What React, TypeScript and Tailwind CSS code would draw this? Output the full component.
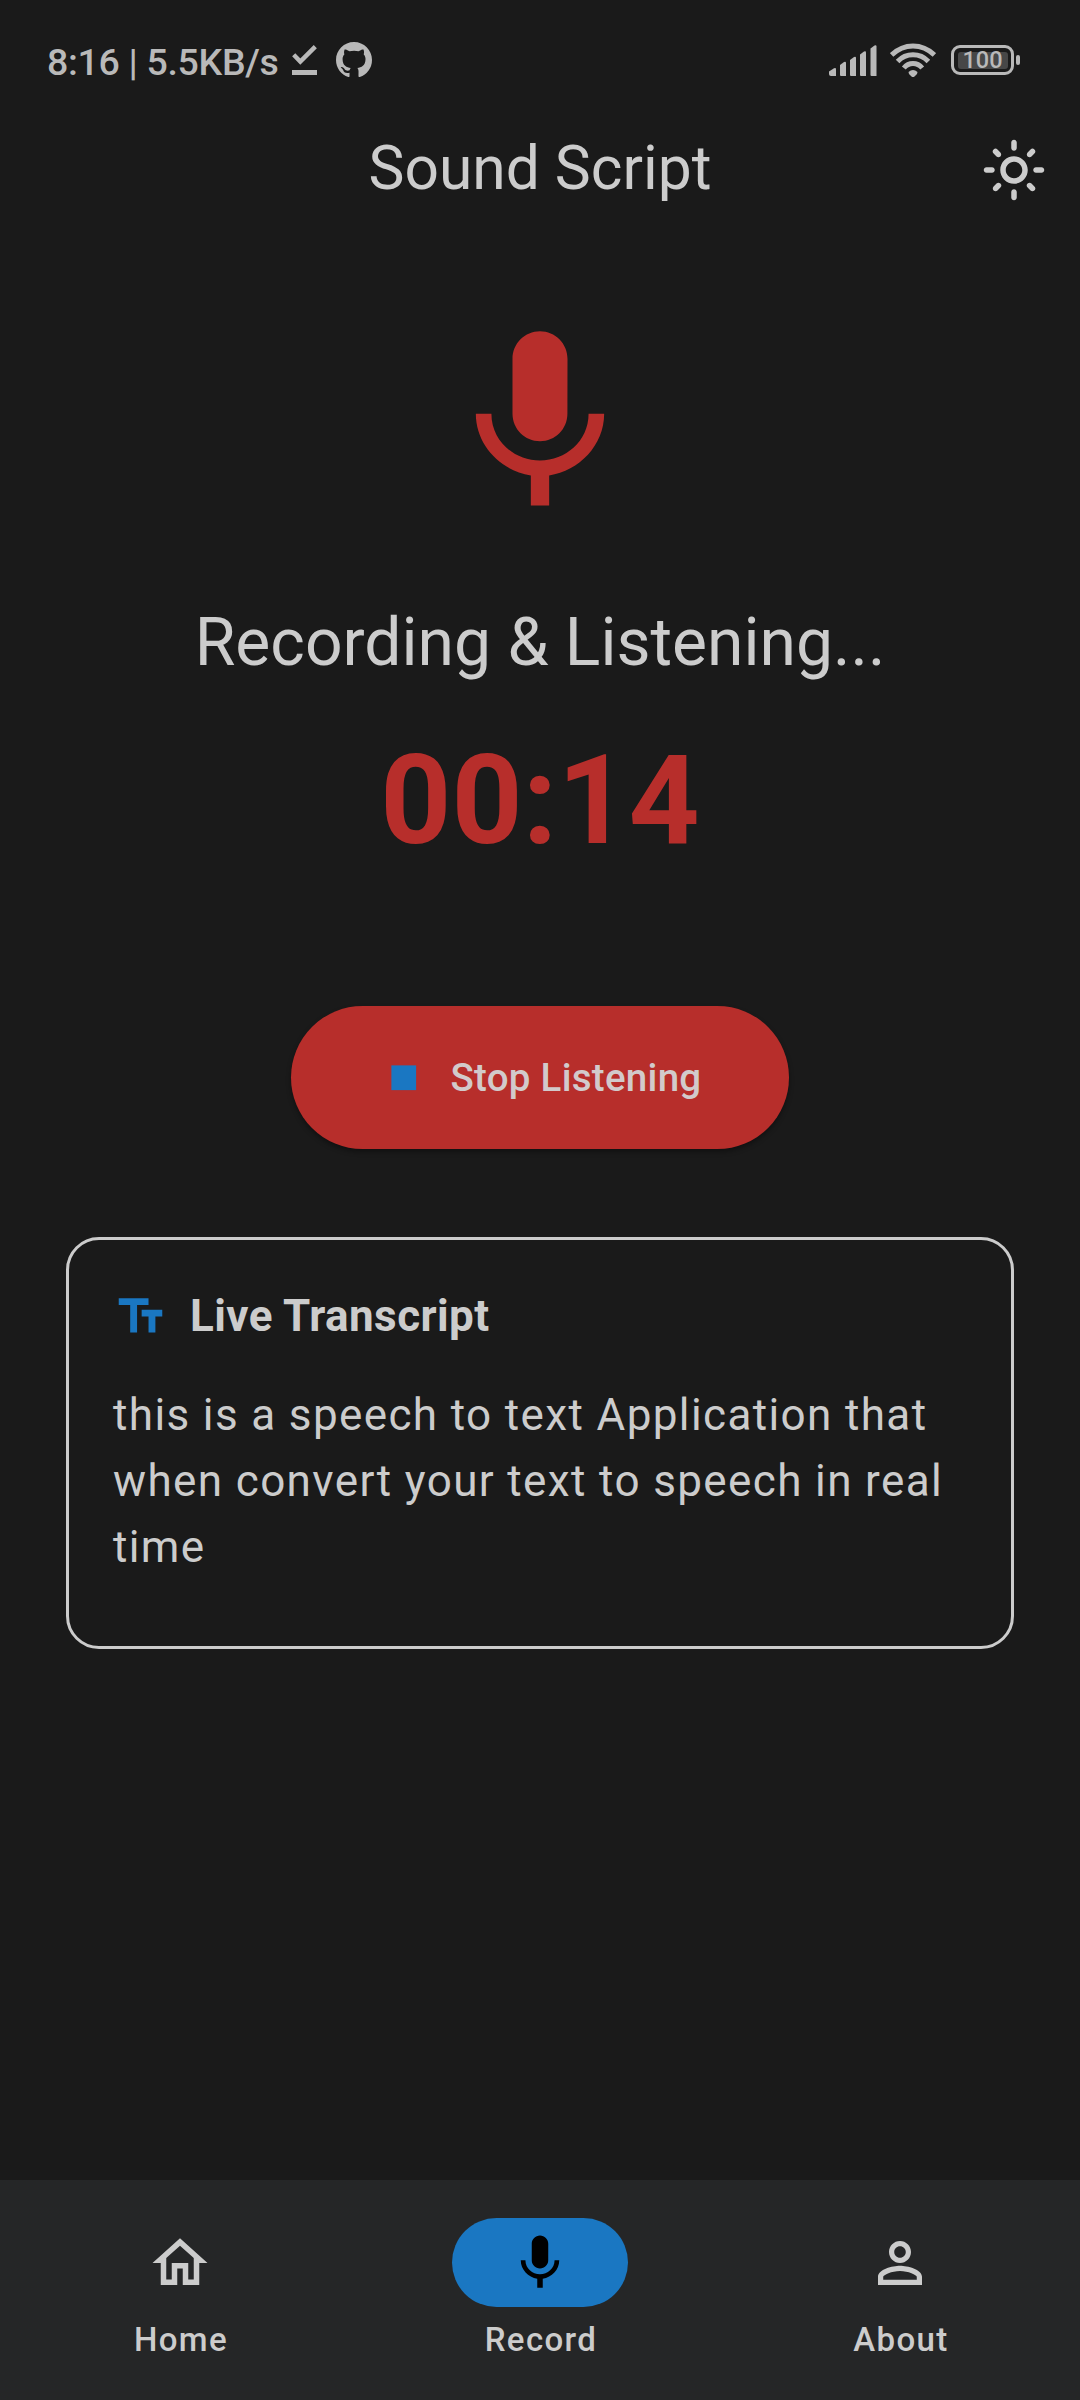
import type { ReactNode } from "react";
import { MdOutlineLightMode } from "react-icons/md";

const MIC =
  "M12 14c1.66 0 2.99-1.34 2.99-3L15 5c0-1.66-1.34-3-3-3S9 3.34 9 5v6c0 1.66 1.34 3 3 3zm5.3-3c0 3-2.54 5.1-5.3 5.1S6.7 14 6.7 11H5c0 3.41 2.72 6.23 6 6.72V21h2v-3.28c3.28-.48 6-3.3 6-6.72h-1.7z";
const HOME =
  "M12 5.69l5 4.5V18h-2v-6H9v6H7v-7.81l5-4.5M12 3L2 12h3v8h6v-6h2v6h6v-8h3L12 3z";
const PERSON =
  "M12 5.9c1.16 0 2.1.94 2.1 2.1s-.94 2.1-2.1 2.1S9.9 9.16 9.9 8s.94-2.1 2.1-2.1m0 9c2.97 0 6.1 1.46 6.1 2.1v1.1H5.9V17c0-.64 3.13-2.1 6.1-2.1M12 4C9.79 4 8 5.79 8 8s1.79 4 4 4 4-1.79 4-4-1.79-4-4-4zm0 9c-2.67 0-8 1.34-8 4v3h16v-3c0-2.66-5.33-4-8-4z";
const TEXT_FIELDS = "M2.5 4v3h5v12h3V7h5V4h-13zm19 5h-9v3h3v7h3v-7h3V9z";
const STOP = "M6 6h12v12H6z";
const GITHUB =
  "M8 0C3.58 0 0 3.58 0 8c0 3.54 2.29 6.53 5.47 7.59.4.07.55-.17.55-.38 0-.19-.01-.82-.01-1.49-2.01.37-2.53-.49-2.69-.94-.09-.23-.48-.94-.82-1.13-.28-.15-.68-.52-.01-.53.63-.01 1.08.58 1.23.82.72 1.21 1.87.87 2.33.66.07-.52.28-.87.51-1.07-1.78-.2-3.64-.89-3.64-3.95 0-.87.31-1.59.82-2.15-.08-.2-.36-1.02.08-2.12 0 0 .67-.21 2.2.82.64-.18 1.32-.27 2-.27s1.36.09 2 .27c1.53-1.04 2.2-.82 2.2-.82.44 1.1.16 1.92.08 2.12.51.56.82 1.27.82 2.15 0 3.07-1.87 3.75-3.65 3.95.29.25.54.73.54 1.48 0 1.07-.01 1.93-.01 2.2 0 .21.15.46.55.38A8.01 8.01 0 0 0 16 8c0-4.42-3.58-8-8-8z";

function Icon({ d, className }: { d: string; className: string }) {
  return (
    <svg viewBox="0 0 24 24" fill="currentColor" className={className}>
      <path d={d} />
    </svg>
  );
}

function StatusBar() {
  return (
    <div className="flex h-[93px] shrink-0 items-start justify-between pl-[47px] pr-[60px] text-[#b9b9b9]">
      <div className="flex pt-[42px]">
        <span className="-mt-[2px] w-[245px] whitespace-nowrap text-[37.5px] font-medium leading-[44px] tracking-[-0.33px]">
          8:16 | 5.5KB/s
        </span>
        <svg viewBox="0 0 25 30" className="mt-[3px] h-[30px] w-[25px]">
          <path d="M1.7 9.8L8.3 16.6L23.3 1.6" fill="none" stroke="currentColor" strokeWidth="4.4" />
          <path d="M0 25h25v5H0z" fill="currentColor" />
        </svg>
        <svg viewBox="0 0 16 16" fill="currentColor" className="ml-[19px] size-[36px]">
          <path d={GITHUB} />
        </svg>
      </div>
      <div className="flex pt-[43px]">
        <svg viewBox="0 0 48 33" fill="currentColor" className="h-[33px] w-[48px]">
          <path d="M0 28.500l5-3.200q2-1 2 1v6.700H2q-2 0-2-2z" />
          <path d="M11 22l4-3q2-1 2 1v13h-5q-1 0-1-1z" />
          <path d="M21 17l4-3q2-1 2 1v18h-5q-1 0-1-1z" />
          <path d="M31 11.500l4-3q2-1 2 1v23.500h-5q-1 0-1-1z" />
          <path d="M41.500 5.500l4-3q2-1 2 1v29.500h-5q-1 0-1-1z" />
        </svg>
        <svg viewBox="0 0 46 34" className="ml-[13px] h-[34px] w-[46px]">
          <g fill="none" stroke="currentColor" strokeWidth="5">
            <path d="M1.600 12Q11 3 23 3T44.400 12" />
            <path d="M7.600 18.500Q14 11.800 23 11.800T38.400 18.500" />
            <path d="M13.800 25Q17.500 20.600 23 20.600T32.200 25" />
          </g>
          <path d="M18.500 29Q23 25 27.500 29L27 31L24.500 33.500Q23 34.500 21.500 33.500L19 31z" fill="currentColor" />
        </svg>
        <div className="ml-[15px] mt-[2px] flex h-[30px] w-[63px] rounded-[9px] border-[3px] border-current p-[3.5px]">
          <div className="flex flex-1 items-center justify-center rounded-[3px] bg-[#474747]">
            <span className="pt-[2px] text-[23.5px] font-medium leading-none">100</span>
          </div>
        </div>
        <div className="ml-[2px] mt-[12px] h-[10px] w-[4px] rounded-[2px] bg-current" />
      </div>
    </div>
  );
}

function NavItem({ label, active, children }: { label: string; active?: boolean; children: ReactNode }) {
  return (
    <div className="flex flex-1 flex-col items-center pt-[38px]">
      <div
        className={
          active
            ? "flex h-[88.5px] w-[176px] items-center justify-center rounded-full bg-[#1a77c2] pt-px text-black"
            : "flex h-[88.5px] w-[176px] items-center justify-center pt-px"
        }
      >
        {children}
      </div>
      <span className="ml-[2px] mt-[11.5px] text-[33px] font-medium leading-[44px] tracking-[1.375px]">{label}</span>
    </div>
  );
}

export default function App() {
  return (
    <div className="flex h-[2400px] w-[1080px] flex-col overflow-hidden bg-[#1a1a1a] font-[Roboto,sans-serif] text-[#cccccc]">
      <StatusBar />

      <header className="grid h-[154px] shrink-0 grid-cols-[1fr_auto_1fr] items-center pr-[33px]">
        <h1 className="col-start-2 ml-[33px] text-[60.5px] leading-[77px] -mt-[3px]">Sound Script</h1>
        <MdOutlineLightMode className="size-[66px] justify-self-end" />
      </header>

      <main className="flex flex-1 flex-col items-center px-[66px] pt-[66px]">
        <Icon d={MIC} className="size-[220px] text-[#b72e2b]" />
        <p className="mt-[70px] whitespace-nowrap text-[66px] leading-[80px]">Recording &amp; Listening...</p>
        <p className="mt-[48px] text-[124px] font-bold leading-[140px] text-[#b72e2b]">00:14</p>
        <button className="mt-[135px] flex h-[143px] w-[498px] items-center rounded-full bg-[#b72e2b] pl-[88px] text-[#d2cacb] shadow-[0_3px_5px_rgba(0,0,0,0.35)]">
          <Icon d={STOP} className="size-[49.5px] text-[#1a77c2]" />
          <span className="ml-[22px] whitespace-nowrap text-[38.5px] font-medium leading-[55px] tracking-[0.275px]">
            Stop Listening
          </span>
        </button>

        <section className="mt-[88px] h-[412px] w-full rounded-[33px] border-[3px] border-[#cccccc] px-[44px] pt-[43px]">
          <div className="flex h-[66px] items-center">
            <Icon d={TEXT_FIELDS} className="size-[55px] text-[#1a77c2]" />
            <h2 className="ml-[22px] text-[44px] font-bold leading-[66px] tracking-[0.4125px]">Live Transcript</h2>
          </div>
          <p className="mt-[33px] text-[44px] leading-[66px] tracking-[1.375px]">
            this is a speech to text Application that when convert your text to speech in real time
          </p>
        </section>
      </main>

      <nav className="flex h-[220px] shrink-0 bg-[#252627]">
        <NavItem label="Home">
          <Icon d={HOME} className="size-[66px]" />
        </NavItem>
        <NavItem label="Record" active>
          <Icon d={MIC} className="size-[66px]" />
        </NavItem>
        <NavItem label="About">
          <Icon d={PERSON} className="size-[66px]" />
        </NavItem>
      </nav>
    </div>
  );
}
